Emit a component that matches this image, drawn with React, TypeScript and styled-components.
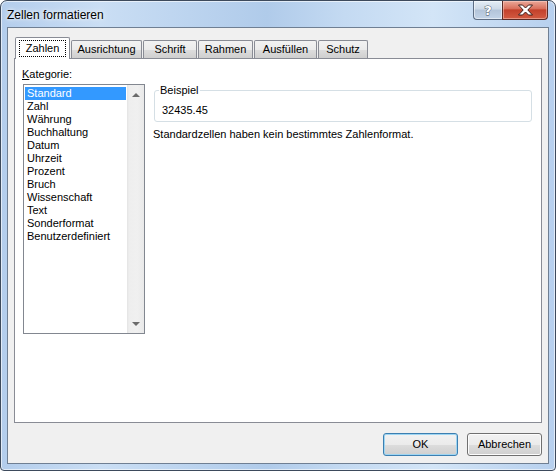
import styled, { createGlobalStyle } from "styled-components";

const GlobalStyle = createGlobalStyle`
  html, body {
    margin: 0;
    padding: 0;
    background: #ffffff;
  }
  body {
    font-family: "Liberation Sans", Arial, sans-serif;
    font-size: 11px;
    color: #000;
  }
`;

const tabs = [
  { label: "Zahlen", w: 55 },
  { label: "Ausrichtung", w: 71 },
  { label: "Schrift", w: 54 },
  { label: "Rahmen", w: 55 },
  { label: "Ausfüllen", w: 63 },
  { label: "Schutz", w: 50 },
];

const categories = [
  "Standard",
  "Zahl",
  "Währung",
  "Buchhaltung",
  "Datum",
  "Uhrzeit",
  "Prozent",
  "Bruch",
  "Wissenschaft",
  "Text",
  "Sonderformat",
  "Benutzerdefiniert",
];

const App = (): JSX.Element => {
  return (
    <>
      <GlobalStyle />
      <Window>
        <TitleBar>
          <Title>Zellen formatieren</Title>
          <Caption>
            <HelpButton>?</HelpButton>
            <CloseButton>
              <svg width="17" height="12" viewBox="0 0 17 12">
                <path
                  d="M1.5 1h4l3 3 3-3h4L10.8 6l4.7 5h-4l-3-3-3 3h-4L6.2 6z"
                  fill="#fff"
                  stroke="#3f1d19"
                  strokeWidth="1"
                  strokeLinejoin="round"
                />
              </svg>
            </CloseButton>
          </Caption>
        </TitleBar>
        <Client>
          <TabRow>
            {tabs.map((t, i) => (
              <Tab key={t.label} $w={t.w} $active={i === 0}>
                {i === 0 ? <Focus>{t.label}</Focus> : t.label}
              </Tab>
            ))}
          </TabRow>
          <Panel>
            <Label>
              <u>K</u>ategorie:
            </Label>
            <Columns>
              <ListBox>
                <Items>
                  {categories.map((c, i) => (
                    <Item key={c} $selected={i === 0}>
                      {c}
                    </Item>
                  ))}
                </Items>
                <ScrollBar>
                  <Arrow $up />
                  <Arrow />
                </ScrollBar>
              </ListBox>
              <Right>
                <Group>
                  <legend>Beispiel</legend>
                  <Sample>32435.45</Sample>
                </Group>
                <Description>Standardzellen haben kein bestimmtes Zahlenformat.</Description>
              </Right>
            </Columns>
          </Panel>
          <Footer>
            <Button $default>OK</Button>
            <Button>Abbrechen</Button>
          </Footer>
        </Client>
      </Window>
    </>
  );
};

export default App;

const Window = styled.div`
  box-sizing: border-box;
  width: 556px;
  height: 471px;
  border: 1px solid #3d4a5c;
  border-radius: 7px 7px 4px 4px;
  padding: 0 6px 6px 6px;
  display: flex;
  flex-direction: column;
  background: linear-gradient(
    to right,
    #b3cdec 0%,
    #cadef4 18%,
    #bcd4ef 34%,
    #b0cbea 48%,
    #c4daf2 62%,
    #d3e5f7 78%,
    #b7d0ee 100%
  );
  box-shadow: inset 0 0 0 1px rgba(255, 255, 255, 0.6);
`;

const TitleBar = styled.div`
  height: 26px;
  display: flex;
  justify-content: space-between;
  align-items: flex-start;
`;

const Title = styled.div`
  font-family: "Liberation Sans", Arial, sans-serif;
  font-size: 12px;
  line-height: 14px;
  padding-top: 7px;
  color: #000;
  text-shadow: 0 0 6px rgba(255, 255, 255, 0.9), 0 0 3px rgba(255, 255, 255, 0.9);
`;

const Caption = styled.div`
  display: flex;
  margin-right: 1px;
`;

const HelpButton = styled.div`
  box-sizing: border-box;
  width: 29px;
  height: 19px;
  border: 1px solid #5d6d83;
  border-top: none;
  border-right: none;
  border-radius: 0 0 0 4px;
  background: linear-gradient(#e4edf6 0%, #cdd9e7 45%, #b3c4d9 50%, #c3d4e8 100%);
  box-shadow: inset 0 0 0 1px rgba(255, 255, 255, 0.5);
  display: flex;
  align-items: center;
  justify-content: center;
  font-family: "DejaVu Sans", sans-serif;
  font-weight: bold;
  font-size: 13px;
  color: #fff;
  -webkit-text-stroke: 0.8px #3f4b5c;
  paint-order: stroke fill;
`;

const CloseButton = styled.div`
  box-sizing: border-box;
  width: 46px;
  height: 19px;
  border: 1px solid #5a2b26;
  border-top: none;
  border-radius: 0 0 4px 0;
  background: linear-gradient(#eaa899 0%, #d9705d 42%, #c3412b 50%, #d35b42 100%);
  box-shadow: inset 0 0 0 1px rgba(255, 220, 210, 0.45);
  display: flex;
  align-items: center;
  justify-content: center;
`;

const Client = styled.div`
  box-sizing: border-box;
  flex: 1;
  border: 1px solid #6f7f93;
  background: #f0f0f0;
  padding: 9px 6px 7px 6px;
  display: flex;
  flex-direction: column;
`;

const TabRow = styled.div`
  height: 21px;
  display: flex;
  align-items: flex-end;
  gap: 1px;
  padding-left: 1px;
  position: relative;
  z-index: 1;
`;

const Tab = styled.div<{ $w: number; $active?: boolean }>`
  box-sizing: border-box;
  width: ${(p) => p.$w}px;
  height: ${(p) => (p.$active ? 22 : 18)}px;
  margin-bottom: ${(p) => (p.$active ? -1 : 0)}px;
  border: 1px solid #898c95;
  border-bottom: none;
  border-radius: 2px 2px 0 0;
  background: ${(p) =>
    p.$active ? "#ffffff" : "linear-gradient(#f2f2f2 0%, #ebebeb 50%, #dddddd 51%, #cfcfcf 100%)"};
  display: flex;
  align-items: center;
  justify-content: center;
  line-height: 13px;
`;

const Focus = styled.span`
  border: 1px dotted #000;
  padding: 1px 6px;
`;

const Panel = styled.div`
  box-sizing: border-box;
  height: 365px;
  border: 1px solid #898c95;
  background: #ffffff;
  padding: 9px 9px 0 7px;
  display: flex;
  flex-direction: column;
`;

const Label = styled.div`
  line-height: 13px;
  margin-bottom: 3px;
`;

const Columns = styled.div`
  display: flex;
  gap: 8px;
`;

const ListBox = styled.div`
  box-sizing: border-box;
  width: 122px;
  height: 250px;
  margin-left: 1px;
  border: 1px solid #828790;
  display: flex;
  padding: 1px 0 0 1px;
`;

const Items = styled.div`
  flex: 1;
  padding-right: 1px;
  padding-top: 1px;
`;

const Item = styled.div<{ $selected?: boolean }>`
  height: 13px;
  line-height: 13px;
  padding-left: 2px;
  white-space: nowrap;
  background: ${(p) => (p.$selected ? "#3399ff" : "transparent")};
  color: ${(p) => (p.$selected ? "#ffffff" : "#000000")};
`;

const ScrollBar = styled.div`
  width: 17px;
  margin-top: -1px;
  background: linear-gradient(to right, #e3e3e3 0%, #eeeeee 12%, #f0f0f0 60%, #e9e9e9 100%);
  display: flex;
  flex-direction: column;
  justify-content: space-between;
  align-items: center;
  padding: 8px 0 7px 0;
`;

const Arrow = styled.div<{ $up?: boolean }>`
  width: 0;
  height: 0;
  border-left: 4px solid transparent;
  border-right: 4px solid transparent;
  ${(p) => (p.$up ? "border-bottom: 4px solid #6b6b6b;" : "border-top: 4px solid #6b6b6b;")}
`;

const Right = styled.div`
  flex: 1;
  display: flex;
  flex-direction: column;
`;

const Group = styled.fieldset`
  margin: 0 0 0 1px;
  padding: 0 7px 4px 7px;
  border: 1px solid #d5dfe5;
  border-radius: 3px;
  legend {
    padding: 0 1px;
    margin-left: -3px;
    line-height: 13px;
  }
`;

const Sample = styled.div`
  line-height: 13px;
  padding-top: 7px;
`;

const Description = styled.div`
  line-height: 13px;
  margin-top: 6px;
`;

const Footer = styled.div`
  margin-top: 10px;
  display: flex;
  justify-content: flex-end;
  gap: 9px;
`;

const Button = styled.div<{ $default?: boolean }>`
  box-sizing: border-box;
  width: 75px;
  height: 23px;
  border: 1px solid ${(p) => (p.$default ? "#3c7fb1" : "#707070")};
  border-radius: 3px;
  background: linear-gradient(#f2f2f2 0%, #ebebeb 50%, #dddddd 51%, #cfcfcf 100%);
  box-shadow: inset 0 0 0 1px ${(p) => (p.$default ? "#9ed5f2" : "#fcfcfc")};
  display: flex;
  align-items: center;
  justify-content: center;
  line-height: 13px;
`;
